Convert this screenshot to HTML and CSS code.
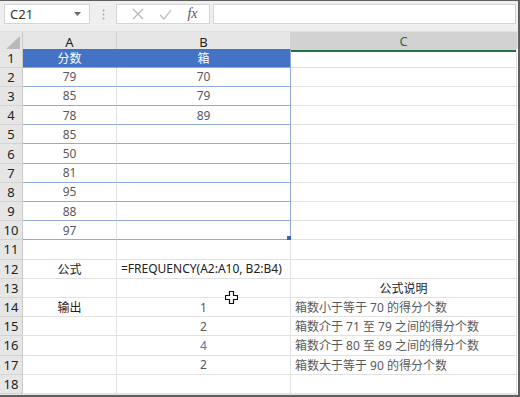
FILE: index.html
```html
<!DOCTYPE html>
<html lang="zh-CN">
<head>
    <meta charset="UTF-8">
    <title>FREQUENCY</title>
    <link rel="stylesheet" href="styles.css">
</head>
<body>

<div class="window">
    <div class="toolbar">
        <div class="namebox">
            <span>C21</span>
            <svg class="drop" width="7" height="4" viewBox="0 0 7 4"><path d="M0 0h7L3.5 4z" fill="#6a6a6a"/></svg>
        </div>
        <div class="grip">
            <svg width="3" height="11" viewBox="0 0 3 11"><circle cx="1.5" cy="1.5" r="1" fill="#a8a8a8"/><circle cx="1.5" cy="5.5" r="1" fill="#a8a8a8"/><circle cx="1.5" cy="9.5" r="1" fill="#a8a8a8"/></svg>
        </div>
        <div class="fxbtns">
            <svg width="12" height="12" viewBox="0 0 12 12"><path d="M1 1l10 10M11 1L1 11" stroke="#b8b8b8" stroke-width="1.2" fill="none"/></svg>
            <svg width="13" height="11" viewBox="0 0 13 11"><path d="M1 6l4 4 7-9" stroke="#b8b8b8" stroke-width="1.2" fill="none"/></svg>
            <span class="fx">fx</span>
        </div>
        <div class="formula"></div>
    </div>

    <div class="sheet">
        <div class="row head">
            <div class="corner"><svg width="14" height="13" viewBox="0 0 14 13"><path d="M14 0v13H0z" fill="#b9b9b9"/></svg></div>
            <div class="ch">A</div>
            <div class="ch">B</div>
            <div class="ch sel">C</div>
        </div>
        <div class="row">
            <div class="rh">1</div>
            <div class="c th">分数</div>
            <div class="c th tb">箱</div>
            <div class="c"></div>
        </div>
        <div class="row">
            <div class="rh">2</div>
            <div class="c tr num">79</div>
            <div class="c tr tb num">70</div>
            <div class="c"></div>
        </div>
        <div class="row">
            <div class="rh">3</div>
            <div class="c tr num">85</div>
            <div class="c tr tb num">79</div>
            <div class="c"></div>
        </div>
        <div class="row">
            <div class="rh">4</div>
            <div class="c tr num">78</div>
            <div class="c tr tb num">89</div>
            <div class="c"></div>
        </div>
        <div class="row">
            <div class="rh">5</div>
            <div class="c tr num">85</div>
            <div class="c tr tb"></div>
            <div class="c"></div>
        </div>
        <div class="row">
            <div class="rh">6</div>
            <div class="c tr num">50</div>
            <div class="c tr tb"></div>
            <div class="c"></div>
        </div>
        <div class="row">
            <div class="rh">7</div>
            <div class="c tr num">81</div>
            <div class="c tr tb"></div>
            <div class="c"></div>
        </div>
        <div class="row">
            <div class="rh">8</div>
            <div class="c tr num">95</div>
            <div class="c tr tb"></div>
            <div class="c"></div>
        </div>
        <div class="row">
            <div class="rh">9</div>
            <div class="c tr num">88</div>
            <div class="c tr tb"></div>
            <div class="c"></div>
        </div>
        <div class="row">
            <div class="rh">10</div>
            <div class="c tr num">97</div>
            <div class="c tr tb"><span class="handle"></span></div>
            <div class="c"></div>
        </div>
        <div class="row">
            <div class="rh">11</div>
            <div class="c"></div>
            <div class="c"></div>
            <div class="c"></div>
        </div>
        <div class="row">
            <div class="rh">12</div>
            <div class="c label">公式</div>
            <div class="c left formula-text">=FREQUENCY(A2:A10, B2:B4)</div>
            <div class="c"></div>
        </div>
        <div class="row">
            <div class="rh">13</div>
            <div class="c"></div>
            <div class="c"></div>
            <div class="c label">公式说明</div>
        </div>
        <div class="row">
            <div class="rh">14</div>
            <div class="c label">输出</div>
            <div class="c num">1</div>
            <div class="c left desc">箱数小于等于 70 的得分个数</div>
        </div>
        <div class="row">
            <div class="rh">15</div>
            <div class="c"></div>
            <div class="c num">2</div>
            <div class="c left desc">箱数介于 71 至 79 之间的得分个数</div>
        </div>
        <div class="row">
            <div class="rh">16</div>
            <div class="c"></div>
            <div class="c num blue">4</div>
            <div class="c left desc">箱数介于 80 至 89 之间的得分个数</div>
        </div>
        <div class="row">
            <div class="rh">17</div>
            <div class="c"></div>
            <div class="c num">2</div>
            <div class="c left desc">箱数大于等于 90 的得分个数</div>
        </div>
        <div class="row">
            <div class="rh">18</div>
            <div class="c"></div>
            <div class="c"></div>
            <div class="c"></div>
        </div>
    </div>

    <!-- mouse pointer over the sheet -->
    <svg class="cursor" width="13" height="13" viewBox="0 0 13 13">
        <path d="M4.5 0.5h4v4h4v4h-4v4h-4v-4h-4v-4h4z" fill="#fff" stroke="#111" stroke-width="1.2"/>
    </svg>
</div>

</body>
</html>
```

FILE: styles.css
```css
body, html {
    margin: 0;
    padding: 0;
    height: 100%;
    overflow: hidden;
    background: #fff;
}
.window {
    position: relative;
    width: 520px;
    height: 397px;
    box-sizing: border-box;
    border-top: 1px solid #5f5f5f;
    border-right: 2px solid #5f5f5f;
    border-bottom: 2px solid #5f5f5f;
    background: #e6e6e6;
    overflow: hidden;
    font-family: "Noto Sans", "Noto Sans CJK SC", sans-serif;
    font-size: 12px;
}
.toolbar {
    display: flex;
    align-items: center;
    height: 31px;
    padding: 0 2px 4px 4px;
    box-sizing: border-box;
    background: #efefef;
    border-bottom: 1px solid #e2e2e2;
}
.namebox {
    display: flex;
    align-items: center;
    justify-content: space-between;
    width: 86px;
    height: 20px;
    box-sizing: border-box;
    padding: 0 8px 0 5px;
    background: #fff;
    border: 1px solid #d4d4d4;
    color: #333;
    font-size: 13px;
}
.grip {
    display: flex;
    justify-content: center;
    width: 26px;
}
.fxbtns {
    display: flex;
    align-items: center;
    justify-content: space-around;
    width: 94px;
    height: 20px;
    box-sizing: border-box;
    padding: 0 4px 0 8px;
    background: #fff;
    border: 1px solid #d4d4d4;
}
.fx {
    font-family: "Liberation Serif", serif;
    font-style: italic;
    font-size: 14px;
    color: #555;
}
.formula {
    flex: 1;
    height: 20px;
    margin-left: 3px;
    box-sizing: border-box;
    background: #fff;
    border: 1px solid #d4d4d4;
}
.sheet {
    background: #fff;
}
.row {
    display: grid;
    grid-template-columns: 23px 94px 174px 226px;
    height: 19.2px;
}
.row.head {
    height: 16.5px;
    background: #e6e6e6;
}
.corner {
    display: flex;
    align-items: flex-end;
    justify-content: flex-end;
    padding: 0 2px 2px 0;
    border-right: 1px solid #c9c9c9;
    border-bottom: 1px solid #c9c9c9;
}
.ch {
    display: flex;
    align-items: center;
    justify-content: center;
    box-sizing: border-box;
    border-right: 1px solid #d0d0d0;
    border-bottom: 1px solid #c9c9c9;
    color: #222;
    font-size: 13px;
}
.ch.sel {
    background: #d2d2d2;
    color: #217346;
    border-bottom: 2px solid #217346;
}
.rh {
    display: flex;
    align-items: center;
    justify-content: center;
    box-sizing: border-box;
    background: #e6e6e6;
    border-right: 1px solid #c9c9c9;
    border-bottom: 1px solid #d3d3d3;
    color: #222;
    font-size: 13px;
}
.c {
    position: relative;
    display: flex;
    align-items: center;
    justify-content: center;
    box-sizing: border-box;
    border-right: 1px solid #e1e1e1;
    border-bottom: 1px solid #e1e1e1;
    white-space: nowrap;
    overflow: visible;
    color: #222;
}
.c.left {
    justify-content: flex-start;
    padding-left: 4px;
}
.c.num {
    color: #595959;
}
.c.desc {
    color: #595959;
}
.c.blue {
    color: #4a72b8;
}
.c.th {
    background: #4472c4;
    color: #fff;
    border-right-color: #4472c4;
    border-bottom-color: #8eaadb;
}
.c.tr {
    border-bottom-color: #8eaadb;
}
.c.tb {
    border-right-color: #8eaadb;
}
.handle {
    position: absolute;
    right: -1px;
    bottom: -1px;
    width: 4px;
    height: 4px;
    background: #3d63b0;
}
.cursor {
    position: absolute;
    left: 225px;
    top: 290px;
}
```
